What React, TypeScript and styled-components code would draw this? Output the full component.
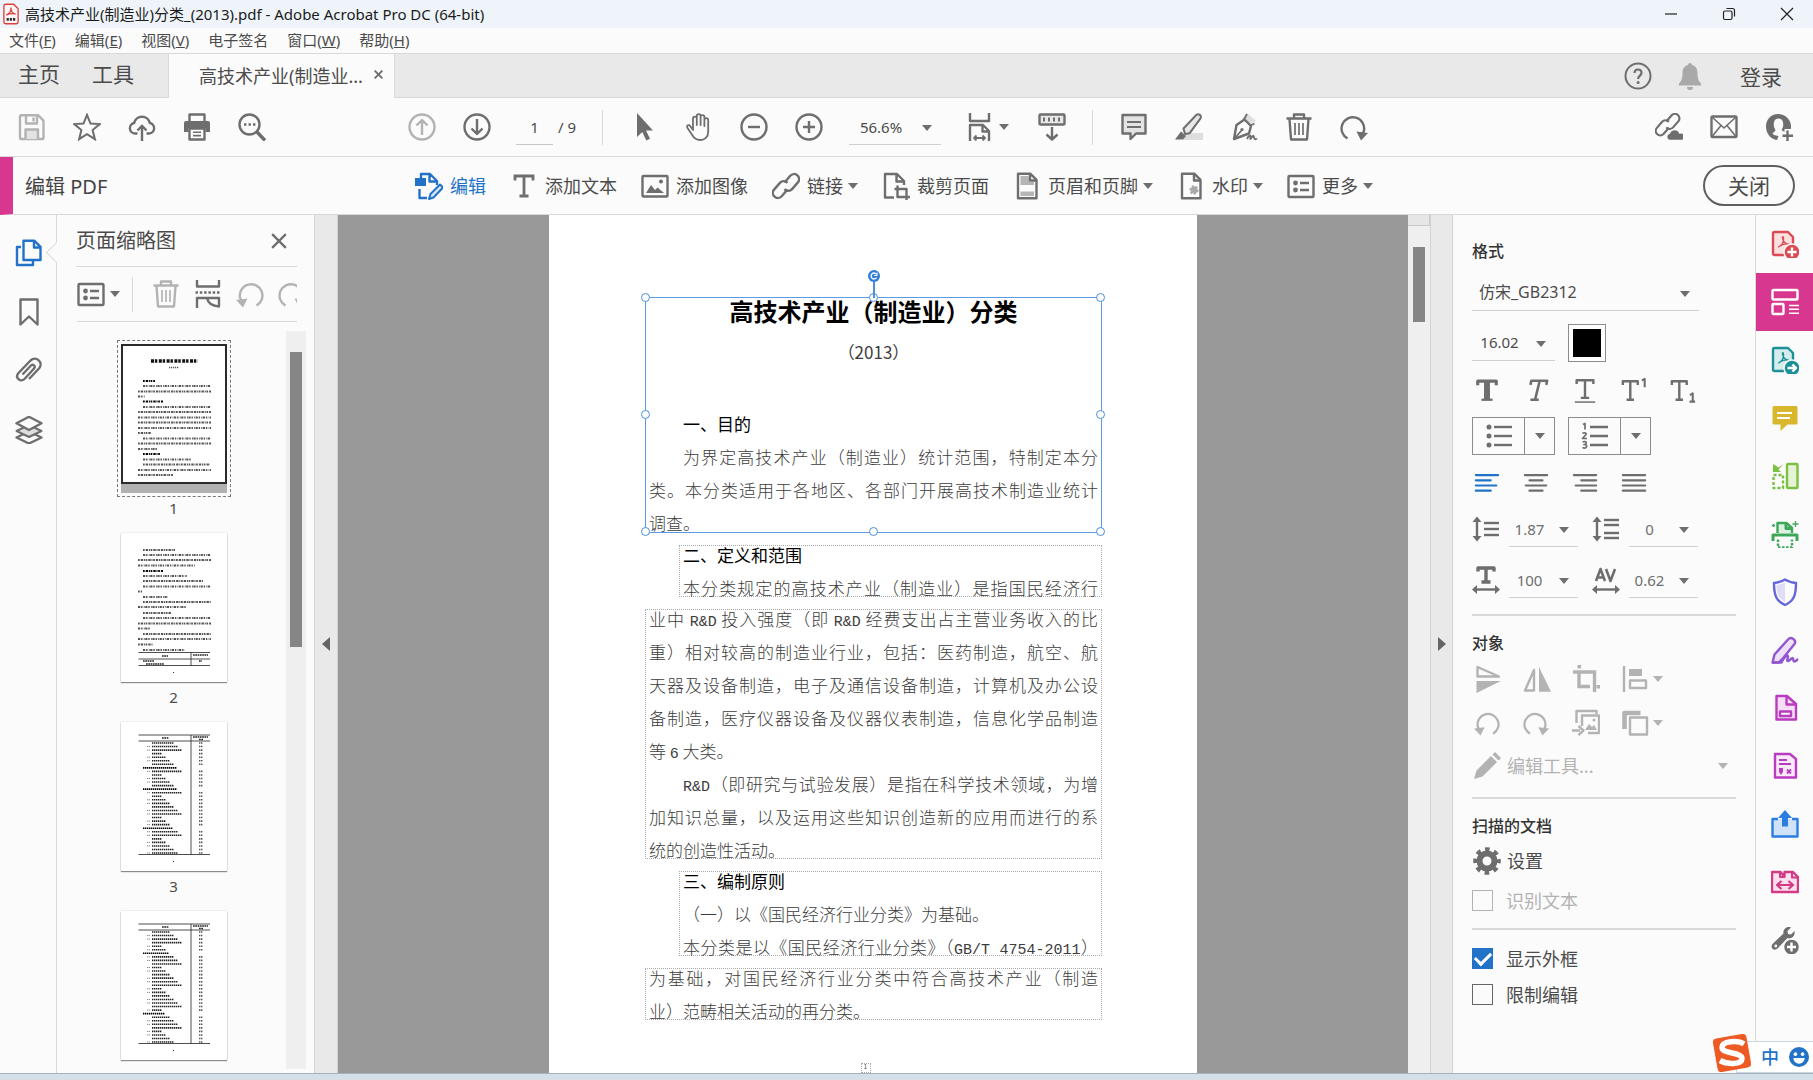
import React from "react";
import styled, { createGlobalStyle, css } from "styled-components";

const ui = `"Noto Sans", "Noto Sans CJK SC", sans-serif`;
const docFont = `"Noto Sans CJK SC", sans-serif`;
const ink = "#4b4b4b";
const iconGrey = "#6e6e6e";
const faded = "#b3b3b3";
const blue = "#2273c8";
const pink = "#d83790";
const surface = "#fbfbfb";
const line = "#d9d9d9";

const Global = createGlobalStyle`
  * { box-sizing: border-box; }
  body { margin: 0; background: ${surface}; color: ${ink}; font-family: ${ui}; font-size: 16px; overflow: hidden; }
  button, input, select { font: inherit; color: inherit; margin: 0; padding: 0; border: 0; background: none; border-radius: 0; outline: none; }
  h1, h2, h3, p { margin: 0; font-weight: 400; }
`;

const Window = styled.div`
  display: flex;
  flex-direction: column;
  height: 100vh;
`;

/* ---------- icons ---------- */
const Svg = styled.svg<{ $size?: number }>`
  width: ${(p) => p.$size ?? 28}px;
  height: ${(p) => p.$size ?? 28}px;
  flex: none;
  display: block;
  fill: none;
  stroke: currentColor;
  stroke-width: 2.4;
  stroke-linejoin: round;
`;

type IconProps = { children: React.ReactNode; size?: number };
const Icon = ({ children, size }: IconProps) => (
  <Svg viewBox="0 0 28 28" $size={size} aria-hidden="true">{children}</Svg>
);
const solid = { fill: "currentColor", stroke: "none" };

const SaveIcon = () => (
  <Icon>
    <path d="M3 2.2h17l5.5 5.5V25a1 1 0 0 1-1 1H3a1 1 0 0 1-1-1V3.200a1 1 0 0 1 1-1z" />
    <path d="M8 2.500v8h11v-8M15.500 4.500v4" /><path d="M7.500 26v-9.500h12.500V26" fill="#e3e3e3" />
  </Icon>
);
const StarIcon = () => (
  <Icon><path d="M14 1.800l3.500 8.700 9.300.6-7.200 6 2.300 9.100-7.900-5-7.900 5 2.300-9.100-7.200-6 9.300-.6z" strokeLinejoin="miter" strokeWidth="2" /></Icon>
);
const CloudIcon = () => (
  <Icon><path d="M9.500 20.500H6.800a5.300 5.300 0 0 1-.6-10.500 8 8 0 0 1 15.600 0 5.300 5.300 0 0 1-.6 10.500h-2.700" /><path d="M14 28V13M9.500 17.500l4.500-4.800 4.500 4.800" /></Icon>
);
const PrintIcon = () => (
  <Icon>
    <path d="M6.500 8V1.500h15V8" /><path d="M3 8h22a2 2 0 0 1 2 2v9h-4.500v-4h-17v4H1v-9a2 2 0 0 1 2-2z" {...solid} />
    <path d="M6.500 15.500h15v11h-15z" fill="#fff" /><path d="M10 19.200h8M10 22.600h8" strokeWidth="1.600" />
  </Icon>
);
const FindIcon = () => (
  <Icon><circle cx="11.500" cy="11.500" r="10" /><path d="M19 19l8 8.500" strokeWidth="3.400" /><path d="M6 11.500h2.400M10.500 11.500h2.400M15 11.500h2.400" strokeWidth="2.600" /></Icon>
);
const UpIcon = () => (
  <Icon><circle cx="14" cy="14" r="12.500" /><path d="M14 22V7M8.500 12.500L14 7l5.500 5.500" /></Icon>
);
const DownIcon = () => (
  <Icon><circle cx="14" cy="14" r="12.500" /><path d="M14 6v15M8.500 15.500L14 21l5.500-5.500" /></Icon>
);
const CursorIcon = () => (
  <Icon><path d="M7 0v24l5.300-5 4 8.500 3.700-1.700-4-8.300h7z" {...solid} /></Icon>
);
const HandIcon = () => (
  <Icon><path d="M8 15V5.500a1.900 1.900 0 0 1 3.800 0V12 3a1.900 1.900 0 0 1 3.800 0v9V4a1.900 1.900 0 0 1 3.800 0v9V7a1.900 1.900 0 0 1 3.800 0v12c0 5-3.500 8-8 8-4 0-6.200-1.800-8-5L2.200 14.500c-.8-2 1.600-3.300 3-1.500L8 17z" strokeWidth="1.800" /></Icon>
);
const MinusIcon = () => (
  <Icon><circle cx="14" cy="14" r="12.500" /><path d="M8 14h12" /></Icon>
);
const PlusIcon = () => (
  <Icon><circle cx="14" cy="14" r="12.500" /><path d="M8 14h12M14 8v12" /></Icon>
);
const FitIcon = () => (
  <Icon><path d="M4 0v8h19V0" /><path d="M4 29V12h13l6 6v11M16.500 12v6.500H23" /><path d="M8 25h11M10.500 22.500L8 25l2.500 2.500M16.500 22.500L19 25l-2.500 2.500" strokeWidth="1.800" /></Icon>
);
const ScrollIcon = () => (
  <Icon><rect x="1.500" y="1.500" width="25" height="10" rx="1" fill="#e8e8e8" /><path d="M5 6.500h2M10 6.500h2M15 6.500h2M20 6.500h2" strokeWidth="4" /><path d="M14 14v12.500M8.500 21.500l5.500 5 5.500-5" /></Icon>
);
const CommentIcon = () => (
  <Icon><path d="M2.500 2h23v18.500H16L10.500 26v-5.500h-8z" fill="#e3e3e3" /><path d="M7 9h14M7 14h14" strokeWidth="2" /></Icon>
);
const MarkerIcon = () => (
  <Icon><path d="M11 20h17v7H8z" fill="#dedede" stroke="none" /><path d="M8.500 15.500L21.500 1.800c2-1.500 5.500.5 4 3.500l-11 15-4.500.7z" fill="#e8e8e8" strokeWidth="2" /><path d="M6 18.500l5 4.500-3 3.500H0z" {...solid} /></Icon>
);
const SignIcon = () => (
  <Icon><path d="M14 6.500L17 0l9 8-6.500 3z" fill="#dedede" stroke="none" /><path d="M14.500 6.500l6.500 6.500-2 7.500L4 26l2.500-14z" /><path d="M4 26l7.500-8.500M17 1l-3.500 6M20.500 12.500l4-2" strokeWidth="1.800" /><circle cx="12" cy="16.500" r="1.600" {...solid} /><path d="M17 26c2-4 4-5 3.500 0 2-3 3-4.500 3.500-1.500.5 2 1.500 2 3 1" strokeWidth="2" /></Icon>
);
const TrashIcon = () => (
  <Icon><path d="M1.500 5.500h25M9 5V1.500h10V5M4.500 6l1.500 20.500h16L23.500 6" /><path d="M10 10v12M14 10v12M18 10v12" strokeWidth="1.700" /></Icon>
);
const RedoIcon = ({ size }: { size?: number }) => (
  <Icon size={size}><path d="M7.500 25.500A11.300 11.300 0 1 1 24 17.500l-1.500 4" /><path d="M16.500 18.500L28 20l-7 7.500z" {...solid} /></Icon>
);
const UndoIcon = ({ size }: { size?: number }) => (
  <Icon size={size}><path d="M20.500 25.500A11.300 11.300 0 1 0 4 17.500l1.500 4" /><path d="M11.500 18.500L0 20l7 7.500z" {...solid} /></Icon>
);
const LinkPath = () => (
  <><path d="M12.500 10.500l5.800-6.700a5 5 0 0 1 7.600 6.600l-5.800 6.700a5 5 0 0 1-7.600 0" /><path d="M15.500 17.500l-5.800 6.700a5 5 0 0 1-7.600-6.600l5.800-6.700a5 5 0 0 1 7.600 0" /></>
);
const LinkIcon = () => <Icon><LinkPath /></Icon>;
const LinkCloudIcon = () => (
  <Icon><g transform="translate(0 -1) scale(.9)"><LinkPath /></g><path d="M14 27.500a4 4 0 0 1 .5-7.500 5.500 5.500 0 0 1 10.300 0A3.900 3.900 0 0 1 27 27.500z" fill="currentColor" stroke={surface} strokeWidth="1.500" /></Icon>
);
const MailIcon = () => (
  <Icon><rect x="1.500" y="3.500" width="25" height="20.500" rx="1" /><path d="M2.500 4.500L14 15 25.500 4.500M2.500 23l8.500-10.500M25.500 23L17 12.500" strokeWidth="1.600" /></Icon>
);
const PersonIcon = () => (
  <Icon><path d="M13 1C6 1 1 6.500 1 13.500S5.500 26 12 27l1.500-4c-4-.5-5.500-1.500-6-2.500 1-1.500 3-2 3-3.500C8 14 7.500 5.500 13.500 5.500S19 14 16.500 17l3 2V16h6.300C27.500 8 21 1 13 1z" {...solid} /><path d="M22.500 17.500v10.500M17.500 22.800H28" /></Icon>
);
const HelpIcon = () => (
  <Icon><circle cx="14" cy="14" r="12.500" strokeWidth="2" /><path d="M10.500 11c.2-4.800 7.200-4.500 7 0-.1 2.500-3.400 2.800-3.400 6" strokeWidth="2.200" /><circle cx="14.100" cy="20.500" r="1.500" {...solid} /></Icon>
);
const BellIcon = () => (
  <Icon><path d="M14 1a2 2 0 0 1 2 2c4 1 5.500 4 5.500 8 0 6 1.500 8.500 3.500 10.500v2H3v-2C5 19.500 6.500 17 6.500 11c0-4 1.500-7 5.500-8a2 2 0 0 1 2-2zM11 25h6a3 3 0 0 1-6 0z" {...solid} /></Icon>
);
const PdfSvg = styled(Svg)`
  width: 16px;
  height: 22px;
`;
const PdfMark = () => (
  <PdfSvg viewBox="0 0 18 24" aria-hidden="true">
    <path d="M3 1h9l5 5v15a2 2 0 0 1-2 2H3a2 2 0 0 1-2-2V3a2 2 0 0 1 2-2z" stroke="#d8413b" strokeWidth="1.500" fill="#fff6f5" />
    <path d="M4 13c3-1 5-4.500 5-8 0 3.500 2 6.500 5 7-3-.5-7-.3-10 1z" stroke="#d8413b" strokeWidth="1.400" />
    <path d="M4 18h10" stroke="#333" strokeWidth="3" strokeDasharray="2.600 1" />
  </PdfSvg>
);
const EditPageIcon = () => (
  <Icon size={30}><path d="M6 6V2h9l7 7v4M14.500 2v7.500H22" /><rect x="0" y="6" width="11" height="8" {...solid} /><path d="M4.500 17v9H12" /><path d="M14 27l1.500-5L25 12.500l3 3-9.500 10z" fill="#d7e6f7" strokeWidth="2" /></Icon>
);
const TextIcon = () => (
  <Icon><path d="M5 8.500V4h18v4.500M14 4v20M9.500 24h9" strokeWidth="2.800" strokeLinejoin="miter" /></Icon>
);
const ImageIcon = () => (
  <Icon><rect x="1.500" y="4" width="25" height="20.500" rx="1" /><path d="M5 21l5-8 4 5 2.500-2.500L23 21z" {...solid} /><circle cx="20" cy="9.500" r="2" {...solid} /></Icon>
);
const CropPageIcon = () => (
  <Icon><path d="M12 25.500H3V2h12l7 7v4M14.500 2v7.500H22" /><path d="M15.500 13.500v11.500H28M12.500 17h12v11" /></Icon>
);
const HeaderIcon = () => (
  <Icon><path d="M5 1.800h12.500l6 6v18.400H5z" /><path d="M7.500 4h8l1 6H21v3H7.500zM7.500 19.500H21v4.500H7.500z" fill="#b5b5b5" stroke="none" /><path d="M17 2v6.500h6" /></Icon>
);
const WatermarkIcon = () => (
  <Icon><path d="M5 1.800h12.500l6 6v18.400H5z" /><path d="M17 2v6.500h6" /><circle cx="17" cy="18" r="3.500" fill="#aaa" stroke="#aaa" strokeDasharray="2 1.500" /></Icon>
);
const ListBoxIcon = () => (
  <Icon><rect x="1.500" y="4" width="25" height="21" rx="1" /><circle cx="8.500" cy="11" r="2.400" {...solid} /><circle cx="8.500" cy="18" r="2.400" {...solid} /><path d="M13 11h9M13 18h9" /></Icon>
);
const PagesIcon = () => (
  <Icon><path d="M6 8H2v18h16v-4" /><path d="M8.500 1.800h11l6 6V21h-17z" /><path d="M19 2v6.500h6.500" /></Icon>
);
const BookmarkIcon = () => (
  <Icon><path d="M5.500 1.500h17v25L14 18.500l-8.500 8z" /></Icon>
);
const ClipIcon = () => (
  <Icon><path d="M8 17.500l8.500-9c2-2 5 .8 3 3L10 22c-4 4-10-1.500-6-6L16 3.500c5.500-5 13.500 2 8.500 8L14.500 22" transform="translate(-.5 0)" /></Icon>
);
const LayersIcon = () => (
  <Icon><path d="M14 15.500l12.500 6L14 27.500l-12.500-6z" /><path d="M14 9l12.500 6L14 21 1.500 15z" fill="#dedede" strokeWidth="2" /><path d="M14 .8l12.500 6.500L14 14 1.500 7.300z" fill={surface} /></Icon>
);
const SplitIcon = () => (
  <Icon><path d="M3 0v6.500h22V0M3 28V18h10c1 5 4 8 12 8.500V18H13" /><path d="M1.500 12.500h25" strokeDasharray="2.500 1.800" /></Icon>
);
const CloseIcon = () => <Icon size={16}><path d="M2 2l24 24M26 2L2 26" strokeWidth="4" /></Icon>;

/* format panel icons */
const BoldIcon = () => <Icon size={26}><path d="M4 9V4.500h20V9M14 4v20" strokeWidth="3.400" /><path d="M14 4v21" strokeWidth="6.400" /><path d="M8 24.500h12" /></Icon>;
const ItalicIcon = () => <Icon size={26}><path d="M8 8.500l1-4.500h17l-1 4.500M18 4l-5 20.500M8 24.500h9" strokeWidth="2.800" /></Icon>;
const UnderlineIcon = () => <Icon size={26}><path d="M5 7.500V3.500h18v4M14 4v18M9.500 22.500h9" strokeWidth="2.600" /><path d="M3 27h22" strokeWidth="1.600" /></Icon>;
const SuperIcon = () => <Icon size={26}><path d="M2 8.500V4.500h16v4M10 4v20M6 24.500h8" strokeWidth="2.600" /><path d="M22.500 4l3-2v9" strokeWidth="2.200" /></Icon>;
const SubIcon = () => <Icon size={26}><path d="M2 8.500V4.500h16v4M10 4v20M6 24.500h8" strokeWidth="2.600" /><path d="M21.500 19.500l3-2v9M21 26.500h6" strokeWidth="2.200" /></Icon>;
const BulletIcon = () => (
  <Icon>{[5, 14, 23].map((y) => <g key={y}><circle cx="4" cy={y} r="2.500" {...solid} /><path d={`M9 ${y}h18`} /></g>)}</Icon>
);
const NumberListIcon = () => (
  <Icon>
    <path d="M9 5h18M9 14h18M9 23h18" />
    <path d="M2 2.500l2-1v6M1.500 11.500c1-1.200 4-1 3.500 1l-3.500 4H6M1.500 20c2-1 4-.3 3.700 1.200-.3 1-1 1.300-2.200 1.300 2.300 0 3 1 2.500 2.300-.8 1.400-2.700 1.300-4 .6" strokeWidth="1.700" />
  </Icon>
);
const AlignIcon = ({ rows }: { rows: [number, number][] }) => (
  <Icon size={26}>{rows.map(([a, b], i) => <path key={i} d={`M${a} ${5.500 + i * 5.600}H${b}`} strokeLinecap="round" />)}</Icon>
);
const LineGapIcon = ({ ys }: { ys: number[] }) => (
  <Icon><path d="M5 5v18" /><path d="M5 1.500L9.500 7h-9zM5 26.500L.5 21h9z" {...solid} />{ys.map((y) => <path key={y} d={`M12 ${y}h15`} />)}</Icon>
);
const WideIcon = ({ children }: { children: React.ReactNode }) => (
  <Icon>{children}<path d="M4 23.500h20" /><path d="M0 23.500l5-4.500v9zM28 23.500l-5-4.500v9z" {...solid} /></Icon>
);
const FlipVIcon = () => <Icon><path d="M3.500 2v9.500H25z" /><path d="M2.500 16H27L2.500 28z" {...solid} /></Icon>;
const FlipHIcon = () => <Icon><path d="M2 25.500h9V5z" /><path d="M16 2v24.700h12z" {...solid} /></Icon>;
const CropIcon = () => <Icon><path d="M1 7h21.500v20M7 7v14.500h11" strokeWidth="3.400" strokeLinejoin="miter" /><path d="M5.500 0h3.500v3.500H5.500zM24.500 20H28v3.500h-3.500z" {...solid} /></Icon>;
const ArrangeIcon = () => <Icon><path d="M3 1v26" /><path d="M8 4h13v7H8z" {...solid} /><rect x="9" y="15.500" width="16" height="7.500" /></Icon>;
const ReplaceIcon = () => <Icon><path d="M4.500 14V2h20v3" /><path d="M10 17V6.500h17V24H16" /><path d="M13 21l4-6 3 3 2-2 3 5z" {...solid} /><circle cx="22" cy="11" r="1.500" {...solid} /><path d="M0 21.500h8M6.500 17l5 4.500-5 4.500" /></Icon>;
const StackIcon = () => <Icon><path d="M3.500 20V4h16" strokeWidth="4.600" /><rect x="9" y="8.500" width="17" height="17" fill={surface} /></Icon>;
const PencilIcon = () => <Icon><path d="M1 27l2.500-8.500L18 4l6 6L9.500 24.500zM19.500 2.500L22 0l6 6-2.500 2.500z" {...solid} /></Icon>;
const GearIcon = () => <Icon><circle cx="14" cy="14" r="7.500" strokeWidth="6" /><circle cx="14" cy="14" r="11.800" strokeWidth="4" strokeDasharray="4.600 4.660" strokeDashoffset="2.300" /></Icon>;

/* tool rail icons */
const acrobat = "M8.500 18c3.500-2 5.500-6 5-9.500-.3-1.500-1.500-.8-1 1 1 3.500 3 5.500 6 5.500-3-.5-7 .5-10 3z";
const ConvertIcon = ({ tint, arrow }: { tint: string; arrow?: boolean }) => (
  <Icon>
    <path d="M13 25H3.500A1.500 1.500 0 0 1 2 23.500v-20A1.500 1.500 0 0 1 3.500 2H17l5 5v8" fill={tint} />
    <path d={acrobat} strokeWidth="1.200" transform="translate(-1 -1)" />
    <circle cx="21" cy="22" r="8" fill="currentColor" stroke={surface} strokeWidth="1.500" />
    <path d={arrow ? "M16.500 22h8M21.500 18.500l3.500 3.500-3.500 3.500" : "M21 17.500v9M16.500 22h9"} stroke="#fff" />
  </Icon>
);
const LayoutIcon = () => <Icon><rect x="1.500" y="2" width="25" height="9.500" rx="1" /><rect x="1.500" y="16" width="11" height="10" rx="1" /><path d="M18 17.500h10M18 21.300h10M18 25.200h10" strokeWidth="1.400" /></Icon>;
const NoteIcon = () => <Icon><path d="M3 2h22a1.500 1.500 0 0 1 1.500 1.500V19a1.500 1.500 0 0 1-1.500 1.500h-8.500L9.500 27v-6.500H3A1.500 1.500 0 0 1 1.500 19V3.500A1.500 1.500 0 0 1 3 2z" {...solid} /><path d="M6 9h15M6 14h13" stroke="#fff" strokeWidth="2" /></Icon>;
const OrganizeIcon = () => <Icon><rect x="16" y="2" width="10.500" height="24" rx="1" fill="#e5f3d8" /><path d="M2.500 13h9.500v13H2.500z" strokeDasharray="3 2" /><path d="M2 2v8h8L7.500 7.500l5-5.500-5 3.500z" {...solid} /></Icon>;
const ScanIcon = () => <Icon><path d="M6.500 13V3h9l5.500 5v5" fill="#ddf1e2" /><path d="M15 3v5.500h6M2 21v-6h24v6M2 15h24" strokeWidth="3" /><path d="M7 19.500v8h14v-8" strokeDasharray="2.500 1.500" /><path d="M24.500 1v6M21.500 4h6M2.500 4v3M1 5.500h3" strokeWidth="1.300" /></Icon>;
const ShieldIcon = () => <Icon><path d="M14 1.500c3 2 6.500 3 11 3.500 0 12-2 18-11 22C5 23 3 17 3 5c4.500-.5 8-1.500 11-3.500z" /><path d="M14 4.500v19.500C7.500 20.500 5.500 16 5.500 7c3.500-.5 6-1.300 8.500-2.500z" fill="#dedcf8" stroke="none" /></Icon>;
const FillSignIcon = () => <Icon><path d="M1.500 26.500l2-8L17 3.500c3-3.500 9 .5 6.500 4.500L11 23.500l-3.500 3z" fill="#eee0f8" /><path d="M1 26.500h9.500c3-6 6-8.500 6.500-6 .3 1.500-2 4.500 0 4.500s3-3 4.500-3 0 3.500 2 3.500 2-1.500 3.500-2.500" /></Icon>;
const FormIcon = () => <Icon><path d="M5.500 2H16l9 8v15.500h-19.500z" fill="#f6dff6" /><path d="M15.500 2v8.500H25" /><rect x="9" y="17.500" width="11" height="4.500" fill={surface} /></Icon>;
const PaperIcon = () => <Icon><path d="M4 2h15l6 5v18.500H4z" fill="#f9e9f9" /><path d="M8 8h8M8 12h12" strokeWidth="1.800" /><path d="M8 16h4v4l-2 3-2-3z" {...solid} /><path d="M16 17.500l4 4M20 17.500l-4 4" strokeWidth="1.800" /></Icon>;
const ShareIcon = () => <Icon><path d="M7 9H1.500v17.500h25V9H21" fill="#cfe2f8" /><path d="M14 0l7 8h-4v8.500h-6V8H7z" {...solid} /></Icon>;
const CompareIcon = () => <Icon><path d="M1 4h8.500l4 4.500V4H22l5 5v15H1z" fill="#fbe0ee" /><path d="M9 4v5h5M21 4v5.500h6" strokeWidth="2" /><path d="M7 17h14M10.500 13L6 17l4.500 4M17.500 13l4.500 4-4.500 4" strokeWidth="2.200" /></Icon>;
const WrenchIcon = () => <Icon><path d="M23.500 5l-3.500 3.500-3-.5-.5-3L20 1.500c-4.500-2-8.500 2.500-7.500 6L1.500 18c-3 4 2 7.500 5 4.500l10-10.500c3 1.500 8-1.500 7-7z" {...solid} /><circle cx="4.800" cy="20" r="1.400" fill={surface} stroke="none" /><circle cx="20.500" cy="21" r="8" fill="currentColor" stroke={surface} strokeWidth="1.500" /><path d="M20.500 16.500v9M16 21h9" stroke="#fff" /></Icon>;

const Caret = styled.span<{ $faded?: boolean }>`
  width: 0;
  height: 0;
  flex: none;
  border: 5px solid transparent;
  border-top: 6px solid ${(p) => (p.$faded ? faded : iconGrey)};
  border-bottom: 0;
`;

/* ---------- title and menus ---------- */
const TitleBar = styled.header`
  display: flex;
  align-items: center;
  height: 28px;
  padding-left: 3px;
  gap: 6px;
  background: #eef4f9;
`;
const TitleText = styled.h1`
  flex: 1;
  font-size: 15px;
  line-height: 20px;
  color: #1b1b1b;
`;
const WindowButton = styled.button`
  width: 52px;
  height: 28px;
  display: grid;
  place-items: center;
  color: #222;
`;
const MenuBar = styled.nav`
  display: flex;
  align-items: center;
  height: 25px;
  padding: 0 0 2px 9px;
  gap: 19px;
  font-size: 15px;
  line-height: 22px;
`;

/* ---------- document tabs ---------- */
const TabBar = styled.div`
  display: flex;
  height: 45px;
  background: #e9e9e9;
  border-top: 1px solid ${line};
  font-size: 21px;
`;
const PlainTabs = styled.div`
  display: flex;
  width: 168px;
  padding: 0 0 6px 18px;
  gap: 32px;
  border-bottom: 1px solid ${line};
`;
const FileTab = styled.div`
  display: flex;
  align-items: center;
  width: 227px;
  padding: 0 0 3px 30px;
  gap: 11px;
  border: solid ${line};
  border-width: 0 1px;
  background: ${surface};
  font-size: 18px;
`;
const TabTools = styled.div`
  flex: 1;
  display: flex;
  align-items: center;
  justify-content: flex-end;
  padding-right: 31px;
  gap: 24px;
  border-bottom: 1px solid ${line};
`;
const Tinted = styled.button<{ $color?: string }>`
  display: grid;
  place-items: center;
  color: ${(p) => p.$color ?? iconGrey};
`;
const LoginLink = styled.a`
  margin-left: 12px;
  color: ${ink};
  text-decoration: none;
`;

/* ---------- toolbars ---------- */
const Toolbar = styled.div`
  display: flex;
  align-items: center;
  height: 59px;
  padding: 0 7px 0 4px;
  border-bottom: 1px solid ${line};
`;
const ToolGroup = styled.div<{ $push?: number }>`
  display: flex;
  align-items: center;
  margin-left: ${(p) => p.$push ?? 0}px;
`;
const Tool = styled(Tinted)`
  width: 55px;
  height: 44px;
`;
const MenuTool = styled(Tinted)`
  display: flex;
  align-items: center;
  gap: 5px;
`;
const PageInput = styled.input`
  width: 37px;
  height: 36px;
  margin-left: 12px;
  border-bottom: 1px solid #c8c8c8;
  text-align: center;
  font-size: 15px;
`;
const PageTotal = styled.span`
  margin-left: 5px;
  width: 32px;
  font-size: 15px;
`;
const Rule = styled.span<{ $inset?: number }>`
  width: 1px;
  height: 35px;
  flex: none;
  margin: 0 ${(p) => p.$inset ?? 0}px;
  background: ${line};
`;
const Spacer = styled.div`
  flex: 1;
`;

const SelectBox = styled.span<{ $width?: number; $left?: boolean }>`
  position: relative;
  display: block;
  width: ${(p) => (p.$width ? `${p.$width}px` : "auto")};
  select {
    appearance: none;
    width: 100%;
    height: 36px;
    border-bottom: 1px solid #cfcfcf;
    padding: ${(p) => (p.$left ? "0 28px 0 7px" : "0 28px 0 0")};
    text-align: ${(p) => (p.$left ? "left" : "center")};
    text-align-last: ${(p) => (p.$left ? "left" : "center")};
    font-size: ${(p) => (p.$left ? 16 : 15)}px;
  }
  ${Caret} {
    position: absolute;
    right: 9px;
    top: 16px;
    pointer-events: none;
  }
`;
const Select = ({ value, label, width, left }: { value: string; label: string; width?: number; left?: boolean }) => (
  <SelectBox $width={width} $left={left}>
    <select aria-label={label} defaultValue={value}><option>{value}</option></select>
    <Caret />
  </SelectBox>
);

const EditBar = styled.div`
  display: flex;
  align-items: center;
  height: 58px;
  border-bottom: 1px solid ${line};
  border-left: 13px solid ${pink};
  padding-right: 18px;
`;
const EditTitle = styled.h2`
  width: 402px;
  padding-left: 12px;
  font-size: 20px;
  color: #444;
`;
const EditTools = styled.div`
  flex: 1;
  display: flex;
  gap: 24px;
`;
const EditTool = styled.button<{ $active?: boolean }>`
  display: flex;
  align-items: center;
  gap: 7px;
  font-size: 18px;
  line-height: 30px;
  white-space: nowrap;
  color: ${(p) => (p.$active ? blue : ink)};
  ${Svg} { width: 28px; color: ${(p) => (p.$active ? blue : iconGrey)}; }
  ${Caret} { margin-left: -2px; }
`;
const CloseButton = styled.button`
  width: 92px;
  height: 41px;
  border: 2px solid #5f5f5f;
  border-radius: 21px;
  font-size: 21px;
  line-height: 30px;
`;

/* ---------- workspace ---------- */
const Workspace = styled.main`
  flex: 1;
  min-height: 0;
  display: flex;
`;
const NavRail = styled.nav`
  width: 57px;
  padding: 8px 0 0 1px;
  border-right: 1px solid ${line};
`;
const NavButton = styled.button<{ $active?: boolean }>`
  position: relative;
  display: grid;
  place-items: center;
  width: 56px;
  height: 59px;
  color: ${(p) => (p.$active ? blue : iconGrey)};
  ${(p) => p.$active && css`
    &::after {
      content: "";
      position: absolute;
      right: -7px;
      top: 22px;
      width: 14px;
      height: 14px;
      transform: rotate(45deg);
      border: solid ${line};
      border-width: 0 0 1px 1px;
      background: ${surface};
    }
  `}
`;
const ThumbPanel = styled.section`
  width: 257px;
  display: flex;
  flex-direction: column;
  overflow: hidden;
`;
const ThumbHead = styled.div`
  display: flex;
  align-items: center;
  justify-content: space-between;
  height: 52px;
  margin: 0 17px 0 19px;
  padding-right: 10px;
  border-bottom: 1px solid ${line};
  h2 { font-size: 20px; line-height: 28px; }
`;
const ThumbTools = styled.div`
  display: flex;
  align-items: center;
  height: 55px;
  margin: 0 17px 0 20px;
  border-bottom: 1px solid ${line};
  overflow: hidden;
`;
const ThumbTool = styled(Tinted)`
  width: 42px;
  flex: none;
`;
const ThumbBody = styled.div`
  flex: 1;
  min-height: 0;
  display: flex;
  margin: 9px 8px 4px 0;
`;
const ThumbList = styled.ol`
  flex: 1;
  margin: 0;
  padding: 13px 0 0 4px;
  list-style: none;
  overflow: hidden;
`;
const ThumbItem = styled.li`
  display: flex;
  flex-direction: column;
  align-items: center;
  height: 189px;
  font-size: 15px;
  line-height: 20px;
  gap: 5px;
`;
const Sheet = styled.span<{ $selected?: boolean }>`
  display: block;
  width: 106px;
  height: 149px;
  background: ${(p) => (p.$selected ? "#b1b1b1" : "#fff")};
  box-shadow: 0 1px 1px #8b8b8b, 0 0 1px #bbb;
  ${(p) => p.$selected && css`
    box-shadow: none;
    outline: 1px dashed #777;
    outline-offset: 3px;
  `}
`;
const Mini = styled.svg<{ $selected?: boolean }>`
  display: block;
  width: 106px;
  height: ${(p) => (p.$selected ? 140 : 149)}px;
  background: #fff;
  border: ${(p) => (p.$selected ? "2px solid #2b2b2b" : "0")};
`;
const Scroll = styled.div<{ $width: number }>`
  display: flex;
  flex-direction: column;
  align-items: center;
  width: ${(p) => p.$width}px;
  background: #efefef;
`;
const ScrollThumb = styled.div<{ $height: string }>`
  width: 12px;
  height: ${(p) => p.$height};
  margin-top: 21px;
  background: #858585;
`;
const ScrollEnd = styled.div`
  width: 100%;
  height: 11px;
  border: solid #c9c9c9;
  border-width: 0 1px 1px 0;
  background: #e6e6e6;
`;
const Gutter = styled.button<{ $side: "left" | "right" }>`
  display: grid;
  place-items: center;
  width: ${(p) => (p.$side === "left" ? 24 : 23)}px;
  border: solid #d4d4d4;
  border-width: 0 1px;
  background: #e9e9e9;
  &::after {
    content: "";
    border: 7px solid transparent;
    ${(p) => (p.$side === "left" ? "border-right: 8px solid #666; border-left: 0;" : "border-left: 8px solid #666; border-right: 0;")}
  }
`;

/* ---------- document page ---------- */
const Canvas = styled.section`
  flex: 1;
  display: flex;
  justify-content: center;
  overflow: hidden;
  background: #999;
`;
const Paper = styled.article`
  display: flex;
  flex-direction: column;
  width: 648px;
  flex: none;
  padding: 82px 95px 0 96px;
  gap: 12px;
  background: #fff;
  color: #3c3c3c;
  font-family: ${docFont};
  font-size: 17px;
  line-height: 17px;
`;
const Block = styled.div<{ $indent?: boolean; $selected?: boolean }>`
  position: relative;
  display: flex;
  flex-direction: column;
  gap: 16px;
  margin-left: ${(p) => (p.$indent ? 34 : 0)}px;
  padding: 0 3px ${(p) => (p.$selected ? 1 : 0)}px;
  border: ${(p) => (p.$selected ? "1px solid #5b9be6" : "1px dotted #a9a9a9")};
`;
const DocTitle = styled.h1`
  margin-bottom: 3px;
  font-size: 24px;
  line-height: 26px;
  font-weight: 700;
  text-align: center;
  color: #000;
`;
const DocYear = styled.p`
  margin: 0 0 39px;
  text-align: center;
`;
const Head = styled.h3<{ $indent?: boolean }>`
  padding-left: ${(p) => (p.$indent ? 34 : 0)}px;
  font-size: 17px;
  font-weight: 400;
  color: #000;
`;
const Line = styled.p<{ $indent?: boolean; $end?: boolean }>`
  height: 17px;
  padding-left: ${(p) => (p.$indent ? 34 : 0)}px;
  white-space: nowrap;
  font-weight: 300;
  text-align-last: ${(p) => (p.$end ? "left" : "justify")};
`;
const Latin = styled.span`
  font-family: "Liberation Mono", monospace;
  font-size: 15px;
  line-height: 1px;
`;
const Handle = styled.i<{ $x: number; $y: number }>`
  position: absolute;
  left: ${(p) => p.$x}%;
  top: ${(p) => p.$y}%;
  width: 9px;
  height: 9px;
  margin: -5px 0 0 -5px;
  border: 1px solid #4a8fe0;
  border-radius: 50%;
  background: #fff;
`;
const Rotator = styled.div`
  position: absolute;
  left: 50%;
  bottom: 100%;
  display: flex;
  flex-direction: column;
  align-items: center;
  margin-left: -6px;
  color: #2f7fd8;
  &::after { content: ""; width: 2px; height: 16px; background: #4a8fe0; }
`;
const Folio = styled.div`
  align-self: center;
  margin: 31px 16px 0 0;
  width: 10px;
  height: 24px;
  border: 1px dotted #a9a9a9;
  font-size: 6px;
  line-height: 6px;
  text-align: center;
`;

/* ---------- format panel ---------- */
const Format = styled.aside`
  width: 302px;
  padding: 26px 19px 0;
  overflow: hidden;
`;
const Row = styled.div<{ $height: number; $below?: number; $above?: number }>`
  display: flex;
  align-items: center;
  height: ${(p) => p.$height}px;
  margin: ${(p) => p.$above ?? 0}px 0 ${(p) => p.$below ?? 0}px;
`;
const FontField = styled.div`
  width: 227px;
`;
const Heading = styled.h2`
  font-size: 16px;
  line-height: 20px;
  font-weight: 500;
  color: #333;
`;
const Swatch = styled.button`
  width: 38px;
  height: 38px;
  margin-left: 13px;
  border: 1px solid #8c8c8c;
  background: #000;
  box-shadow: inset 0 0 0 4px #fff;
`;
const Cell = styled(Tinted)`
  width: 49px;
  height: 36px;
  justify-content: start;
  padding-left: 2px;
`;
const CellMenu = styled(Cell)`
  display: flex;
  align-items: center;
  gap: 4px;
  width: 60px;
`;
const Combo = styled.div`
  display: flex;
  width: 83px;
  height: 38px;
  margin-right: 13px;
  border: 1px solid #8c8c8c;
  button:first-child { width: 51px; }
  button:last-child { flex: 1; border-left: 1px solid #8c8c8c; }
`;
const Measure = styled.div`
  display: flex;
  align-items: center;
  gap: 9px;
  width: 120px;
  color: ${iconGrey};
`;
const Divider = styled.hr<{ $after: number }>`
  height: 2px;
  margin: 0 0 ${(p) => p.$after}px;
  border: 0;
  background: ${line};
`;
const PanelButton = styled.button<{ $faded?: boolean }>`
  display: flex;
  align-items: center;
  width: 100%;
  padding: 0 8px 0 1px;
  gap: 6px;
  font-size: 18px;
  line-height: 28px;
  color: ${(p) => (p.$faded ? faded : ink)};
  ${Svg} { color: ${(p) => (p.$faded ? faded : iconGrey)}; }
  ${Caret} { margin-left: auto; }
`;
const Check = styled.label<{ $faded?: boolean }>`
  display: flex;
  align-items: center;
  height: 36px;
  gap: 13px;
  font-size: 18px;
  color: ${(p) => (p.$faded ? faded : ink)};
  margin-bottom: ${(p) => (p.$faded ? 10 : 0)}px;
  input {
    appearance: none;
    display: grid;
    place-items: center;
    width: 21px;
    height: 21px;
    border: 1px solid ${(p) => (p.$faded ? faded : "#666")};
  }
  input:checked { border-color: ${blue}; background: ${blue}; }
  input:checked::after {
    content: "";
    width: 7px;
    height: 13px;
    margin-bottom: 4px;
    border: solid #fff;
    border-width: 0 3px 3px 0;
    transform: rotate(45deg);
  }
`;

/* ---------- right tool rail ---------- */
const Rail = styled.nav`
  width: 58px;
  border-left: 1px solid ${line};
`;
const RailButton = styled.button<{ $color: string; $active?: boolean }>`
  display: grid;
  place-items: center;
  width: 100%;
  height: 58px;
  color: ${(p) => (p.$active ? "#fff" : p.$color)};
  background: ${(p) => (p.$active ? p.$color : "transparent")};
`;
const TaskEdge = styled.footer`
  height: 7px;
  border-top: 1px solid #a9b2ba;
  background: #d3dfe9;
`;

/* ---------- input method bar ---------- */
const ImeBar = styled.div`
  position: fixed;
  right: 0;
  bottom: 7px;
  display: flex;
  align-items: center;
  height: 32px;
  padding: 0 4px 0 22px;
  gap: 8px;
  border: 1px solid #c9d6e6;
  border-right: 0;
  background: #fff;
  color: ${blue};
`;
const ImeMode = styled.button`
  width: 22px;
  font-size: 18px;
  line-height: 28px;
  font-weight: 500;
`;
const ImeLogo = styled.svg`
  position: absolute;
  left: -26px;
  bottom: -1px;
  width: 42px;
  height: 40px;
`;

const Miniature = ({ kind }: { kind: number }) => {
  const prose: [number, number, number][] = kind === 1
    ? [[22, 37, 12], [22, 42, 68], [17, 47.5, 73], [17, 52.500, 7], [22, 57.500, 20], [22, 63, 68], [17, 68, 73], [17, 73.500, 73], [17, 78.500, 73], [17, 84, 73], [17, 89, 13], [22, 94.500, 68], [17, 99.500, 73], [17, 105, 20], [22, 110, 17], [22, 115.500, 48], [22, 120.500, 67], [17, 126, 73], [17, 131, 35]]
    : [[22, 17, 32], [22, 22, 68], [17, 27, 73], [17, 32.500, 57], [22, 38, 20], [22, 43, 44], [22, 48, 60], [22, 53.500, 68], [17, 58.500, 4], [22, 64, 25], [22, 69, 68], [17, 74, 49], [22, 80, 28], [22, 85, 68], [17, 90.500, 73], [17, 95.500, 12], [22, 101, 68], [17, 106, 73], [17, 111.500, 15], [22, 117, 42]];
  const rows = Array.from({ length: 32 }, (_, i) => i);
  return (
    <Mini viewBox={kind === 1 ? "2 2 102 136" : "0 0 106 149"} $selected={kind === 1} aria-hidden="true">
      {kind === 1 && <g stroke="#111"><path d="M30 17h47" strokeWidth="3.400" strokeDasharray="3 .9 2.400 1.500" /><path d="M48 23.500h10" stroke="#555" strokeWidth="1.500" strokeDasharray="1.200 .8" /></g>}
      {kind < 3 && prose.map(([x, y, w], i) => {
        const heading = w < 21 && x === 22;
        return (
          <path key={i} d={`M${x} ${y}h${w}`} stroke={heading ? "#000" : "#555"} strokeWidth={heading ? 2.2 : 1.8} strokeDasharray={i % 2 ? "2.200 .9 1.400 1.300 .8 .6" : "1.700 1 2.400 .8 1 .7"} />
        );
      })}
      {kind === 2 && <g stroke="#222" fill="none"><path d="M17.500 119.500H89M17.500 126H89M17.500 132.500H89M70 119.500v13" strokeWidth=".8" /><path d="M41 123h6M72 122h15M22 128h11M25 131h18M78 128h3" strokeWidth="1.600" strokeDasharray="1.700 .6" /></g>}
      {kind > 2 && (
        <g stroke="#222">
          <path d="M17.500 13H89M17.500 19H89M17.500 132.500H89M70 13v119.500" strokeWidth=".8" />
          <path d="M41 16h7M72 15h15M78 17.500h4" strokeWidth="1.500" strokeDasharray="1.700 .6" />
          {rows.map((i) => {
            const y = 21 + i * 3.550;
            const section = i % 17 === (kind === 3 ? 7 : 6) || (kind === 3 && i === 13);
            const width = 10 + ((i * 7 + kind * 5) % 6) * 4;
            return (
              <g key={i} strokeWidth="1.600" strokeDasharray="1.400 .6">
                {section ? <path d={`M22 ${y}h${width + 8}`} stroke="#000" /> : <path d={`M31 ${y}h${width}`} />}
                {!section && i % 3 !== 0 && <path d={`M26 ${y}h3`} stroke="#888" strokeWidth="1" />}
                {!section && <path d={`M78 ${y}h4`} stroke="#555" />}
              </g>
            );
          })}
        </g>
      )}
      {kind > 1 && <path d="M52 139.500h1" stroke="#333" />}
    </Mini>
  );
};

const corners: [number, number][] = [[0, 0], [50, 0], [100, 0], [0, 50], [100, 50], [0, 100], [50, 100], [100, 100]];
const menus: [string, string?][] = [["文件", "F"], ["编辑", "E"], ["视图", "V"], ["电子签名"], ["窗口", "W"], ["帮助", "H"]];
const editTools = [
  { label: "编辑", icon: <EditPageIcon />, active: true },
  { label: "添加文本", icon: <TextIcon /> },
  { label: "添加图像", icon: <ImageIcon /> },
  { label: "链接", icon: <LinkIcon />, menu: true },
  { label: "裁剪页面", icon: <CropPageIcon /> },
  { label: "页眉和页脚", icon: <HeaderIcon />, menu: true },
  { label: "水印", icon: <WatermarkIcon />, menu: true },
  { label: "更多", icon: <ListBoxIcon />, menu: true },
];
const railTools = [
  { label: "创建 PDF", color: "#dc4a54", icon: <ConvertIcon tint="#fbe0e0" /> },
  { label: "编辑 PDF", color: pink, icon: <LayoutIcon />, active: true },
  { label: "导出 PDF", color: "#1d8f96", icon: <ConvertIcon tint="#d5eced" arrow /> },
  { label: "注释", color: "#d9b72c", icon: <NoteIcon /> },
  { label: "组织页面", color: "#7cc042", icon: <OrganizeIcon /> },
  { label: "扫描和 OCR", color: "#3da75a", icon: <ScanIcon /> },
  { label: "保护", color: "#6767dc", icon: <ShieldIcon /> },
  { label: "填写和签名", color: "#9257cf", icon: <FillSignIcon /> },
  { label: "准备表单", color: "#b93cc0", icon: <FormIcon /> },
  { label: "请求签名", color: "#b93cc0", icon: <PaperIcon /> },
  { label: "共享", color: "#2b7de0", icon: <ShareIcon /> },
  { label: "比较文件", color: "#d33a86", icon: <CompareIcon /> },
  { label: "更多工具", color: iconGrey, icon: <WrenchIcon /> },
];

export default function App() {
  return (
    <Window lang="zh-CN">
      <Global />
      <TitleBar>
        <PdfMark />
        <TitleText>高技术产业(制造业)分类_(2013).pdf - Adobe Acrobat Pro DC (64-bit)</TitleText>
        <WindowButton aria-label="最小化"><Icon size={14}><path d="M2 14h24" /></Icon></WindowButton>
        <WindowButton aria-label="还原"><Icon size={14}><rect x="3" y="8" width="17" height="17" rx="3" /><path d="M9 3h12a4 4 0 0 1 4 4v12" /></Icon></WindowButton>
        <WindowButton aria-label="关闭窗口"><Icon size={14}><path d="M2 2l24 24M26 2L2 26" /></Icon></WindowButton>
      </TitleBar>
      <MenuBar>
        {menus.map(([name, key]) => (
          <button key={name}>{name}{key && <>(<u>{key}</u>)</>}</button>
        ))}
      </MenuBar>
      <TabBar>
        <PlainTabs><button>主页</button><button>工具</button></PlainTabs>
        <FileTab>
          <span>高技术产业(制造业...</span>
          <Tinted aria-label="关闭标签"><Icon size={9}><path d="M2 2l24 24M26 2L2 26" strokeWidth="6" /></Icon></Tinted>
        </FileTab>
        <TabTools>
          <Tinted aria-label="帮助"><HelpIcon /></Tinted>
          <Tinted $color="#a9a9a9" aria-label="通知"><BellIcon /></Tinted>
          <LoginLink href="#login">登录</LoginLink>
        </TabTools>
      </TabBar>
      <Toolbar>
        <ToolGroup>
          <Tool $color={faded} aria-label="保存"><SaveIcon /></Tool>
          <Tool aria-label="加星标"><StarIcon /></Tool>
          <Tool aria-label="上传"><CloudIcon /></Tool>
          <Tool aria-label="打印"><PrintIcon /></Tool>
          <Tool aria-label="查找"><FindIcon /></Tool>
        </ToolGroup>
        <ToolGroup $push={115}>
          <Tool $color={faded} aria-label="上一页"><UpIcon /></Tool>
          <Tool aria-label="下一页"><DownIcon /></Tool>
          <PageInput aria-label="页码" defaultValue="1" />
          <PageTotal>/ 9</PageTotal>
        </ToolGroup>
        <ToolGroup $push={12}>
          <Rule />
        </ToolGroup>
        <ToolGroup $push={13}>
          <Tool aria-label="选择"><CursorIcon /></Tool>
          <Tool aria-label="手形"><HandIcon /></Tool>
          <Tool aria-label="缩小"><MinusIcon /></Tool>
          <Tool aria-label="放大"><PlusIcon /></Tool>
        </ToolGroup>
        <ToolGroup $push={13}>
          <Select value="56.6%" label="缩放" width={92} />
        </ToolGroup>
        <ToolGroup $push={25}>
          <MenuTool aria-label="适合宽度"><FitIcon /><Caret /></MenuTool>
        </ToolGroup>
        <ToolGroup $push={15}>
          <Tool aria-label="滚动"><ScrollIcon /></Tool>
        </ToolGroup>
        <ToolGroup $push={13}>
          <Rule />
        </ToolGroup>
        <ToolGroup $push={13}>
          <Tool aria-label="添加附注"><CommentIcon /></Tool>
          <Tool aria-label="高亮"><MarkerIcon /></Tool>
          <Tool aria-label="签名"><SignIcon /></Tool>
          <Tool aria-label="删除"><TrashIcon /></Tool>
          <Tool aria-label="旋转"><RedoIcon /></Tool>
        </ToolGroup>
        <Spacer />
        <ToolGroup>
          <Tool aria-label="共享链接"><LinkCloudIcon /></Tool>
          <Tool aria-label="电子邮件"><MailIcon /></Tool>
          <Tool aria-label="邀请他人"><PersonIcon /></Tool>
        </ToolGroup>
      </Toolbar>
      <EditBar>
        <EditTitle>编辑 PDF</EditTitle>
        <EditTools>
          {editTools.map((t) => (
            <EditTool key={t.label} $active={t.active}>{t.icon}{t.label}{t.menu && <Caret />}</EditTool>
          ))}
        </EditTools>
        <CloseButton>关闭</CloseButton>
      </EditBar>

      <Workspace>
        <NavRail>
          <NavButton $active aria-label="页面缩略图"><PagesIcon /></NavButton>
          <NavButton aria-label="书签"><BookmarkIcon /></NavButton>
          <NavButton aria-label="附件"><ClipIcon /></NavButton>
          <NavButton aria-label="图层"><LayersIcon /></NavButton>
        </NavRail>
        <ThumbPanel>
          <ThumbHead>
            <h2>页面缩略图</h2>
            <Tinted aria-label="关闭面板"><CloseIcon /></Tinted>
          </ThumbHead>
          <ThumbTools>
            <MenuTool aria-label="选项"><ListBoxIcon /><Caret /></MenuTool>
            <Rule $inset={12} />
            <ThumbTool $color={faded} aria-label="删除页面"><TrashIcon /></ThumbTool>
            <ThumbTool aria-label="拆分页面"><SplitIcon /></ThumbTool>
            <ThumbTool $color={faded} aria-label="逆时针旋转"><UndoIcon /></ThumbTool>
            <ThumbTool $color={faded} aria-label="顺时针旋转"><RedoIcon /></ThumbTool>
          </ThumbTools>
          <ThumbBody>
            <ThumbList>
              {[1, 2, 3, 4].map((n) => (
                <ThumbItem key={n}>
                  <Sheet $selected={n === 1}><Miniature kind={n} /></Sheet>
                  {n < 4 && <span>{n}</span>}
                </ThumbItem>
              ))}
            </ThumbList>
            <Scroll $width={20}><ScrollThumb $height="40%" /></Scroll>
          </ThumbBody>
        </ThumbPanel>
        <Gutter $side="left" aria-label="收起左侧面板" />

        <Canvas>
          <Paper>
            <Block $selected>
              <DocTitle>高技术产业（制造业）分类</DocTitle>
              <DocYear>（2013）</DocYear>
              <Head $indent>一、目的</Head>
              <Line $indent>为界定高技术产业（制造业）统计范围，特制定本分</Line>
              <Line>类。本分类适用于各地区、各部门开展高技术制造业统计</Line>
              <Line $end>调查。</Line>
              {corners.map(([x, y]) => <Handle key={`${x}-${y}`} $x={x} $y={y} />)}
              <Rotator>
                <Icon size={12}><circle cx="14" cy="14" r="14" {...solid} /><path d="M20 10a7 7 0 1 0 0 8" stroke="#fff" strokeWidth="3" /><path d="M21 6v7h-7" stroke="#fff" /></Icon>
              </Rotator>
            </Block>
            <Block $indent>
              <Head>二、定义和范围</Head>
              <Line>本分类规定的高技术产业（制造业）是指国民经济行</Line>
            </Block>
            <Block>
              <Line>业中 <Latin>R&amp;D</Latin> 投入强度（即 <Latin>R&amp;D</Latin> 经费支出占主营业务收入的比</Line>
              <Line>重）相对较高的制造业行业，包括：医药制造，航空、航</Line>
              <Line>天器及设备制造，电子及通信设备制造，计算机及办公设</Line>
              <Line>备制造，医疗仪器设备及仪器仪表制造，信息化学品制造</Line>
              <Line $end>等 <Latin>6</Latin> 大类。</Line>
              <Line $indent><Latin>R&amp;D</Latin>（即研究与试验发展）是指在科学技术领域，为增</Line>
              <Line>加知识总量，以及运用这些知识创造新的应用而进行的系</Line>
              <Line $end>统的创造性活动。</Line>
            </Block>
            <Block $indent>
              <Head>三、编制原则</Head>
              <Line $end>（一）以《国民经济行业分类》为基础。</Line>
              <Line>本分类是以《国民经济行业分类》（<Latin>GB/T 4754-2011</Latin>）</Line>
            </Block>
            <Block>
              <Line>为基础，对国民经济行业分类中符合高技术产业（制造</Line>
              <Line $end>业）范畴相关活动的再分类。</Line>
            </Block>
            <Folio>1</Folio>
          </Paper>
        </Canvas>

        <Scroll $width={22}><ScrollEnd /><ScrollThumb $height="75px" /></Scroll>
        <Gutter $side="right" aria-label="收起右侧面板" />

        <Format>
          <Heading>格式</Heading>
          <Row $height={55} $above={4}><FontField><Select value="仿宋_GB2312" label="字体" left /></FontField></Row>
          <Row $height={45}>
            <Select value="16.02" label="字号" width={83} />
            <Swatch aria-label="文本颜色" />
          </Row>
          <Row $height={50}>
            <Cell aria-label="粗体"><BoldIcon /></Cell>
            <Cell aria-label="斜体"><ItalicIcon /></Cell>
            <Cell aria-label="下划线"><UnderlineIcon /></Cell>
            <Cell aria-label="上标"><SuperIcon /></Cell>
            <Cell aria-label="下标"><SubIcon /></Cell>
          </Row>
          <Row $height={42}>
            <Combo><Tinted aria-label="项目符号"><BulletIcon /></Tinted><Tinted aria-label="项目符号样式"><Caret /></Tinted></Combo>
            <Combo><Tinted aria-label="编号"><NumberListIcon /></Tinted><Tinted aria-label="编号样式"><Caret /></Tinted></Combo>
          </Row>
          <Row $height={51}>
            <Cell $color={blue} aria-label="左对齐"><AlignIcon rows={[[2, 26], [2, 18], [2, 24], [2, 18]]} /></Cell>
            <Cell aria-label="居中"><AlignIcon rows={[[2, 26], [7, 21], [3, 25], [7, 21]]} /></Cell>
            <Cell aria-label="右对齐"><AlignIcon rows={[[2, 26], [10, 26], [4, 26], [10, 26]]} /></Cell>
            <Cell aria-label="两端对齐"><AlignIcon rows={[[2, 26], [2, 26], [2, 26], [2, 26]]} /></Cell>
          </Row>
          <Row $height={42}>
            <Measure><LineGapIcon ys={[8, 14, 20]} /><Select value="1.87" label="行距" width={69} /></Measure>
            <Measure><LineGapIcon ys={[5, 10, 18, 23]} /><Select value="0" label="段落间距" width={69} /></Measure>
          </Row>
          <Row $height={60} $below={4}>
            <Measure><WideIcon><path d="M6 5.500V2h16v3.500M14 2v14M9.500 16h9" strokeWidth="3.400" /></WideIcon><Select value="100" label="水平缩放" width={69} /></Measure>
            <Measure><WideIcon><path d="M4 15L8.500 3 13 15M6 11.500h5M14 3l4.500 12L23 3" strokeWidth="2.600" /></WideIcon><Select value="0.62" label="字符间距" width={69} /></Measure>
          </Row>
          <Divider $after={17} />
          <Heading>对象</Heading>
          <Row $height={52}>
            <Cell $color={faded} aria-label="垂直翻转"><FlipVIcon /></Cell>
            <Cell $color={faded} aria-label="水平翻转"><FlipHIcon /></Cell>
            <Cell $color={faded} aria-label="裁剪图像"><CropIcon /></Cell>
            <CellMenu $color={faded} aria-label="对齐对象"><ArrangeIcon /><Caret $faded /></CellMenu>
          </Row>
          <Row $height={36}>
            <Cell $color={faded} aria-label="逆时针"><UndoIcon size={26} /></Cell>
            <Cell $color={faded} aria-label="顺时针"><RedoIcon size={26} /></Cell>
            <Cell $color={faded} aria-label="替换图像"><ReplaceIcon /></Cell>
            <CellMenu $color={faded} aria-label="排列对象"><StackIcon /><Caret $faded /></CellMenu>
          </Row>
          <Row $height={50} $below={6}><PanelButton $faded><PencilIcon />编辑工具...<Caret $faded /></PanelButton></Row>
          <Divider $after={17} />
          <Heading>扫描的文档</Heading>
          <Row $height={42} $above={4}><PanelButton><GearIcon />设置</PanelButton></Row>
          <Check $faded><input type="checkbox" disabled />识别文本</Check>
          <Divider $after={10} />
          <Check><input type="checkbox" defaultChecked />显示外框</Check>
          <Check><input type="checkbox" />限制编辑</Check>
        </Format>
        <Rail>
          {railTools.map((t) => (
            <RailButton key={t.label} $color={t.color} $active={t.active} aria-label={t.label}>{t.icon}</RailButton>
          ))}
        </Rail>
      </Workspace>
      <TaskEdge />

      <ImeBar>
        <ImeLogo viewBox="0 0 42 40" aria-hidden="true">
          <rect x="4" y="3" width="34" height="34" rx="4" fill="#ee5a24" transform="rotate(-10 21 20)" />
          <path d="M33 11c-6-4-22-3-22 3.500S31 19 31 25.500 16 31.500 9 27.500" fill="none" stroke="#fff" strokeWidth="5.500" />
        </ImeLogo>
        <ImeMode aria-label="中文输入">中</ImeMode>
        <Tinted $color={blue} aria-label="表情">
          <Icon size={20}><circle cx="14" cy="14" r="14" {...solid} /><circle cx="9" cy="10" r="2.500" fill="#fff" stroke="none" /><circle cx="19" cy="10" r="2.500" fill="#fff" stroke="none" /><path d="M6 15.500h16a8 8 0 0 1-16 0z" fill="#fff" stroke="none" /></Icon>
        </Tinted>
      </ImeBar>
    </Window>
  );
}
